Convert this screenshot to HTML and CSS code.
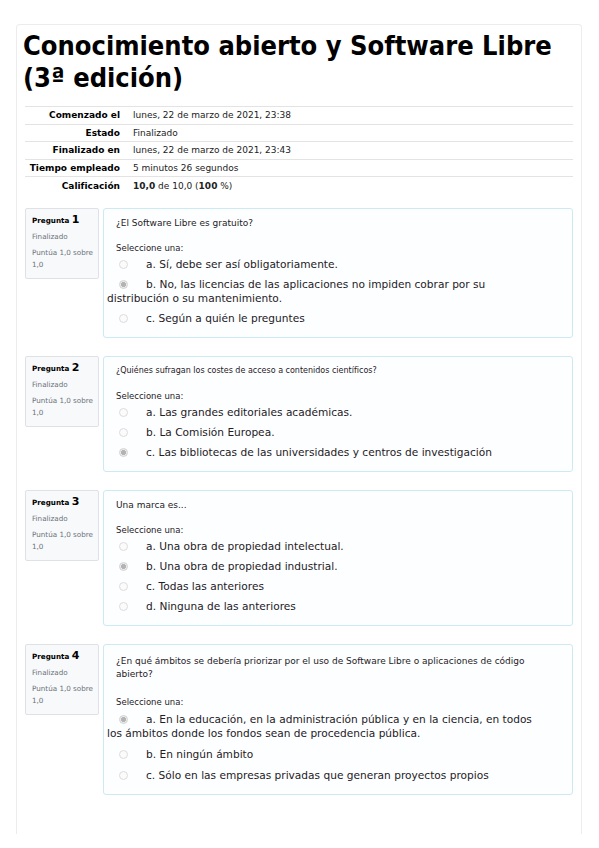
FILE: index.html
```html
<!DOCTYPE html>
<html lang="es">
<head>
<meta charset="utf-8">
<title>Conocimiento abierto y Software Libre</title>
<link rel="stylesheet" href="styles.css">
</head>
<body>
<div class="page">
  <h1 class="title">Conocimiento abierto y Software Libre (3ª edición)</h1>

  <table class="summary">
    <tr><th>Comenzado el</th><td>lunes, 22 de marzo de 2021, 23:38</td></tr>
    <tr><th>Estado</th><td>Finalizado</td></tr>
    <tr><th>Finalizado en</th><td>lunes, 22 de marzo de 2021, 23:43</td></tr>
    <tr><th>Tiempo empleado</th><td>5 minutos 26 segundos</td></tr>
    <tr><th>Calificación</th><td><b>10,0</b> de 10,0 (<b>100</b> %)</td></tr>
  </table>

  <div class="question q-wide">
    <div class="info">
      <div class="qno">Pregunta <span class="num">1</span></div>
      <div class="state">Finalizado</div>
      <div class="grade">Puntúa 1,0 sobre 1,0</div>
    </div>
    <div class="content">
      <div class="qtext">¿El Software Libre es gratuito?</div>
      <div class="prompt">Seleccione una:</div>
      <div class="answer"><span class="radio"></span>a. Sí, debe ser así obligatoriamente.</div>
      <div class="answer"><span class="radio checked"></span>b. No, las licencias de las aplicaciones no impiden cobrar por su distribución o su mantenimiento.</div>
      <div class="answer"><span class="radio"></span>c. Según a quién le preguntes</div>
    </div>
  </div>

  <div class="question">
    <div class="info">
      <div class="qno">Pregunta <span class="num">2</span></div>
      <div class="state">Finalizado</div>
      <div class="grade">Puntúa 1,0 sobre 1,0</div>
    </div>
    <div class="content">
      <div class="qtext">¿Quiénes sufragan los costes de acceso a contenidos científicos?</div>
      <div class="prompt">Seleccione una:</div>
      <div class="answer"><span class="radio"></span>a. Las grandes editoriales académicas.</div>
      <div class="answer"><span class="radio"></span>b. La Comisión Europea.</div>
      <div class="answer"><span class="radio checked"></span>c. Las bibliotecas de las universidades y centros de investigación</div>
    </div>
  </div>

  <div class="question q-wide">
    <div class="info">
      <div class="qno">Pregunta <span class="num">3</span></div>
      <div class="state">Finalizado</div>
      <div class="grade">Puntúa 1,0 sobre 1,0</div>
    </div>
    <div class="content">
      <div class="qtext">Una marca es...</div>
      <div class="prompt">Seleccione una:</div>
      <div class="answer"><span class="radio"></span>a. Una obra de propiedad intelectual.</div>
      <div class="answer"><span class="radio checked"></span>b. Una obra de propiedad industrial.</div>
      <div class="answer"><span class="radio"></span>c. Todas las anteriores</div>
      <div class="answer"><span class="radio"></span>d. Ninguna de las anteriores</div>
    </div>
  </div>

  <div class="question q-wide q-long">
    <div class="info">
      <div class="qno">Pregunta <span class="num">4</span></div>
      <div class="state">Finalizado</div>
      <div class="grade">Puntúa 1,0 sobre 1,0</div>
    </div>
    <div class="content">
      <div class="qtext">¿En qué ámbitos se debería priorizar por el uso de Software Libre o aplicaciones de código abierto?</div>
      <div class="prompt">Seleccione una:</div>
      <div class="answer"><span class="radio checked"></span>a. En la educación, en la administración pública y en la ciencia, en todos los ámbitos donde los fondos sean de procedencia pública.</div>
      <div class="answer"><span class="radio"></span>b. En ningún ámbito</div>
      <div class="answer"><span class="radio"></span>c. Sólo en las empresas privadas que generan proyectos propios</div>
    </div>
  </div>
</div>
</body>
</html>
```

FILE: styles.css
```css
html, body {
  margin: 0;
  padding: 0;
  background: #ffffff;
}
body {
  font-family: "DejaVu Sans", Verdana, sans-serif;
  color: #1d2125;
  padding: 24px 17px 14px 16px;
}
.page {
  border: 1px solid #ececec;
  border-bottom: none;
  border-radius: 4px 4px 0 0;
  height: 810px;
  box-sizing: border-box;
  padding: 5px 8px 0 6px;
}
.title {
  font-family: "DejaVu Sans Condensed", "DejaVu Sans", sans-serif;
  font-stretch: condensed;
  font-size: 27px;
  font-weight: bold;
  line-height: 32px;
  margin: 0 0 12px 0;
  color: #000;
}
.summary {
  width: calc(100% - 2px);
  margin-left: 2px;
  border-collapse: collapse;
  font-size: 9px;
  margin-bottom: 14px;
}
.summary tr {
  border-top: 1px solid #e3e3e3;
  height: 17.5px;
}
.summary th {
  text-align: right;
  font-weight: bold;
  width: 95px;
  padding: 0 5px 0 0;
  white-space: nowrap;
  color: #000;
}
.summary td {
  padding: 0 8px;
  color: #222;
}
.question {
  display: flex;
  gap: 4px;
  margin-left: 2px;
  margin-bottom: 18px;
}
.info {
  width: 74px;
  flex: none;
  align-self: flex-start;
  box-sizing: border-box;
  background: #f8f9fa;
  border: 1px solid #dee2e6;
  border-radius: 2px;
  padding: 5px 4px 7px 6px;
  font-size: 7.2px;
  color: #6a737b;
  line-height: 12px;
}
.qno {
  color: #000;
  font-weight: bold;
  font-size: 7.2px;
  margin-bottom: 4px;
}
.num {
  font-size: 11px;
}
.grade {
  margin-top: 4px;
  width: 64px;
}
.content {
  flex: 1;
  background: #fdfeff;
  border: 1px solid #cde9f1;
  border-radius: 3px;
  padding: 8px 34px 9px 2px;
  font-size: 8px;
  color: #1d2125;
}
.qtext {
  padding-left: 10px;
  line-height: 12px;
  margin-bottom: 14px;
}
.q-wide .qtext {
  font-size: 9px;
}
.q-long .content {
  padding-top: 10px;
}
.q-long .qtext {
  line-height: 13px;
  margin-bottom: 16px;
}
.q-long .answer {
  padding: 3.5px 0 3.5px 1px;
}
.prompt {
  font-size: 8.5px;
  padding-left: 10px;
  margin-bottom: 1px;
}
.answer {
  font-size: 10.6px;
  line-height: 14px;
  padding: 3px 0 3px 1px;
}
.radio {
  display: inline-block;
  width: 9px;
  height: 9px;
  border: 1px solid #dcdcdc;
  border-radius: 50%;
  background: #fbfbfb;
  margin: 0 18px 0 12px;
  vertical-align: -1px;
  box-sizing: border-box;
}
.radio.checked {
  border-color: #d2d2d2;
  background: radial-gradient(circle, #b3b3b3 0 2.2px, #ececec 2.8px);
}
```
